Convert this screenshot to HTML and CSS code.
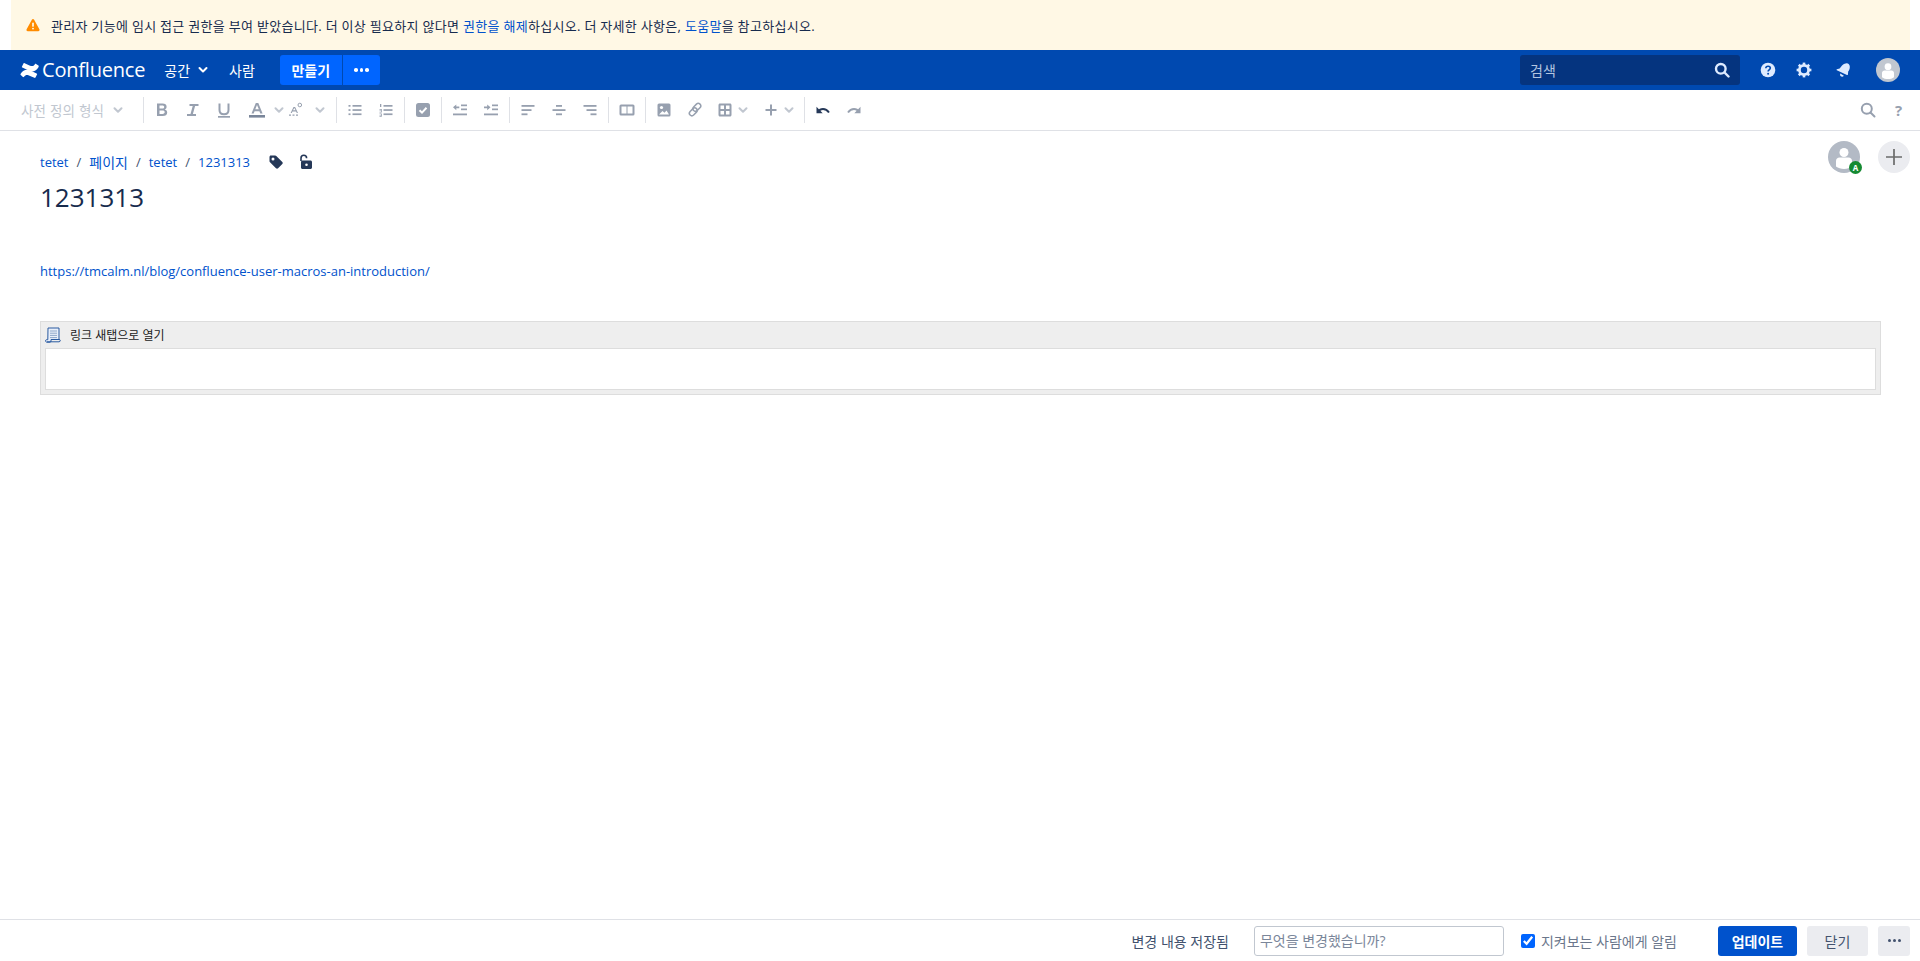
FILE: index.html
```html
<!DOCTYPE html>
<html lang="ko">
<head>
<meta charset="utf-8">
<title>1231313</title>
<link rel="stylesheet" href="styles.css">
</head>
<body>
<div class="page">
  <div class="banner">
    <svg class="banner-icon" viewBox="0 0 16 16"><path fill="#ff8b00" d="M6.7 1.9c.6-1.1 2-1.1 2.6 0l6 11c.6 1.1-.1 2.3-1.3 2.3H2c-1.2 0-1.9-1.2-1.3-2.3z"/><rect x="7" y="5" width="2" height="5" rx="1" fill="#fff8e5"/><circle cx="8" cy="12.1" r="1.1" fill="#fff8e5"/></svg>
    <span>관리자 기능에 임시 접근 권한을 부여 받았습니다. 더 이상 필요하지 않다면 <a href="#">권한을 해제</a>하십시오. 더 자세한 사항은, <a href="#">도움말</a>을 참고하십시오.</span>
  </div>

  <nav class="nav">
    <a class="brand" href="#">
      <svg class="brand-logo" viewBox="0 0 20 16"><path fill="#fff" d="M.4 11.6C3.6 6.8 7 6.2 11 8l6.6 3.1c.5.2.7.7.4 1.2l-1.6 3.1c-.2.4-.7.6-1.2.4l-5.8-2.6c-2.2-1-3.8-.6-5.2 1.5-.3.4-.8.5-1.200.2L.7 12.800c-.4-.3-.5-.8-.3-1.200z"/><path fill="#fff" d="M19.600 4.400C16.400 9.200 13 9.800 9 8L2.400 4.900c-.5-.2-.7-.7-.4-1.200L3.600.6c.2-.4.7-.6 1.200-.4l5.800 2.600c2.200 1 3.800.6 5.200-1.500.3-.4.8-.5 1.200-.2l2.500 1.500c.4.3.5.8.1 1.800z"/></svg>
      <span class="brand-name">Confluence</span>
    </a>
    <a class="nav-link nav-spaces" href="#">공간<svg class="nav-chev" viewBox="0 0 12 12"><path d="M2.500 4l3.500 3.500L9.500 4" fill="none" stroke="#fff" stroke-width="2" stroke-linecap="round" stroke-linejoin="round"/></svg></a>
    <a class="nav-link nav-people" href="#">사람</a>
    <div class="create">
      <button class="create-main">만들기</button>
      <button class="create-more"><span class="dots"><i></i><i></i><i></i></span></button>
    </div>
    <div class="nav-right">
      <div class="search">
        <span class="search-text">검색</span>
        <svg class="ico16" viewBox="0 0 16 16"><circle cx="6.800" cy="6.800" r="4.800" fill="none" stroke="#deebff" stroke-width="2.400"/><path d="M10.500 10.500l4 4" stroke="#deebff" stroke-width="2.400" stroke-linecap="round"/></svg>
      </div>
      <svg class="nav-ico help-ico" viewBox="0 0 16 16"><circle cx="8" cy="8" r="7.300" fill="#deebff"/><path d="M5.800 6.300c0-1.300 1-2.100 2.300-2.100s2.200.8 2.200 1.900c0 1.800-2.200 1.700-2.200 3.300" fill="none" stroke="#0049b0" stroke-width="1.600"/><circle cx="8.100" cy="11.700" r="1" fill="#0049b0"/></svg>
      <svg class="nav-ico gear-ico" viewBox="0 0 16 16"><circle cx="8" cy="8" r="4.600" fill="none" stroke="#deebff" stroke-width="2.800"/><g fill="#deebff"><rect x="6.700" y=".6" width="2.600" height="3"/><rect x="6.700" y="12.400" width="2.600" height="3"/><rect x=".6" y="6.700" width="3" height="2.600"/><rect x="12.400" y="6.700" width="3" height="2.600"/><rect x="6.700" y=".6" width="2.600" height="3" transform="rotate(45 8 8)"/><rect x="6.700" y="12.400" width="2.600" height="3" transform="rotate(45 8 8)"/><rect x=".6" y="6.700" width="3" height="2.600" transform="rotate(45 8 8)"/><rect x="12.400" y="6.700" width="3" height="2.600" transform="rotate(45 8 8)"/></g></svg>
      <svg class="nav-ico bell-ico" viewBox="0 0 16 16"><path fill="#deebff" d="M11.700 1.200c1.800 0 3 1.300 3.100 3.200.1 2-.5 3.600-1.600 5.100l-.3 3c0 .5-.5.7-.9.400L1.800 8.300c-.4-.3-.4-.8.100-1l2.700-.7C6 5 7.500 2.600 9.600 1.800c.7-.4 1.400-.6 2.100-.6zM5.300 11.600l3.600 2.200c-.9 1.200-2.300 1.200-3.100.5-.7-.6-.9-1.700-.5-2.700z"/></svg>
      <span class="avatar avatar-nav"><svg viewBox="0 0 32 32"><circle cx="16" cy="16" r="16" fill="#c1c7d0"/><circle cx="16" cy="11.500" r="4.500" fill="#fff"/><path d="M8 20c0-2 1.500-3.500 3.500-3.500h9c2 0 3.500 1.500 3.500 3.500v5.500c-2 1.600-5 2.500-8 2.500s-6-.9-8-2.500z" fill="#fff"/></svg></span>
    </div>
  </nav>

  <div class="toolbar">
    <div class="tb-format">
      <span class="tb-format-text">사전 정의 형식</span>
      <svg class="chev" viewBox="0 0 12 12"><path d="M2.500 4.300L6 7.800l3.500-3.500"/></svg>
    </div>
    <div class="tb-group">
      <span class="btn"><svg viewBox="0 0 16 16"><path fill="#97a0af" d="M3 1.500h5.600c2.500 0 4 1.200 4 3.200 0 1.300-.7 2.300-1.800 2.700 1.500.4 2.400 1.500 2.400 3 0 2.300-1.700 3.600-4.500 3.600H3zm2.500 5.100h2.700c1.300 0 2-.6 2-1.600s-.7-1.500-2-1.500H5.500zm0 5.300h3c1.500 0 2.200-.6 2.200-1.800s-.8-1.700-2.200-1.700h-3z"/></svg></span>
      <span class="btn"><svg viewBox="0 0 16 16"><path fill="#97a0af" d="M4.500 2h9v2h-3.400l-2.200 8h3.100v2H2v-2h3.500l2.200-8H4.500z"/></svg></span>
      <span class="btn"><svg viewBox="0 0 16 16"><path fill="none" stroke="#97a0af" stroke-width="2" d="M3.500 1.500v6.500c0 2.800 1.700 4.300 4.500 4.300s4.500-1.500 4.500-4.300V1.500"/><rect x="2" y="14" width="12" height="1.700" fill="#97a0af"/></svg></span>
      <span class="drop drop-color">
        <svg class="ico16" viewBox="0 0 16 16"><path fill="#97a0af" d="M6.800 1h2.500l4.300 10.500h-2.300l-.9-2.300H5.600l-.9 2.300H2.500zm-.5 6.200h3.500L8 2.900z"/><rect y="13" width="16" height="2.600" fill="#7a869a"/></svg>
        <svg class="chev" viewBox="0 0 12 12"><path d="M2.500 4.300L6 7.800l3.500-3.500"/></svg>
      </span>
      <span class="drop drop-clear">
        <svg class="ico16" viewBox="0 0 16 16"><path fill="#97a0af" d="M5.500 5h1.600L10 11H8.800l-.7-1.600H4.500L3.800 11H2.600zm-.5 3.300h2.600L6.300 5.900z"/><circle cx="11.800" cy="3" r="1.800" fill="none" stroke="#97a0af"/><path d="M1 13.200h2m1.500 0h2m1.500 0h2" stroke="#97a0af" stroke-width="1.200"/></svg>
        <svg class="chev" viewBox="0 0 12 12"><path d="M2.500 4.300L6 7.800l3.500-3.500"/></svg>
      </span>
    </div>
    <div class="tb-group">
      <span class="btn"><svg viewBox="0 0 16 16" fill="#97a0af"><rect x="1.500" y="3" width="2" height="1.700"/><rect x="5.500" y="3" width="9" height="1.700"/><rect x="1.500" y="7.200" width="2" height="1.700"/><rect x="5.500" y="7.200" width="9" height="1.700"/><rect x="1.500" y="11.400" width="2" height="1.700"/><rect x="5.500" y="11.400" width="9" height="1.700"/></svg></span>
      <span class="btn"><svg viewBox="0 0 16 16" fill="#97a0af"><rect x="2" y="2" width="1.300" height="3"/><path d="M1.500 7h2.300v3.500H1.500v-.8h1.500V9H1.500v-.6h1.500v-.7H1.500zM1.500 11.500h2.300v3.200H1.500V14h1.500v-.5H1.500v-.6h1.500v-.7H1.500z"/><rect x="5.500" y="3" width="9" height="1.700"/><rect x="5.500" y="7.200" width="9" height="1.700"/><rect x="5.500" y="11.400" width="9" height="1.700"/></svg></span>
    </div>
    <div class="tb-group">
      <span class="btn"><svg viewBox="0 0 16 16"><rect x="1" y="1" width="14" height="14" rx="2.500" fill="#97a0af"/><path d="M4.500 8.200l2.500 2.400 4.500-4.800" fill="none" stroke="#fff" stroke-width="2"/></svg></span>
    </div>
    <div class="tb-group">
      <span class="btn"><svg viewBox="0 0 16 16" fill="#97a0af"><path d="M1 5.300L4.300 2.500V4.500h3v1.700h-3v2z"/><rect x="9" y="2.500" width="6" height="1.700"/><rect x="9" y="6.500" width="6" height="1.700"/><rect x="1" y="11.500" width="14" height="1.800"/></svg></span>
      <span class="btn"><svg viewBox="0 0 16 16" fill="#97a0af"><path d="M7.500 5.300L4.200 2.500V4.500H1v1.700h3.200v2z"/><rect x="9" y="2.500" width="6" height="1.700"/><rect x="9" y="6.500" width="6" height="1.700"/><rect x="1" y="11.500" width="14" height="1.800"/></svg></span>
    </div>
    <div class="tb-group">
      <span class="btn"><svg viewBox="0 0 16 16" fill="#97a0af"><rect x="1.500" y="3" width="13" height="1.800"/><rect x="1.500" y="7.200" width="10" height="1.800"/><rect x="1.500" y="11.400" width="6" height="1.800"/></svg></span>
      <span class="btn"><svg viewBox="0 0 16 16" fill="#97a0af"><rect x="5" y="3" width="6" height="1.800"/><rect x="1.500" y="7.200" width="13" height="1.800"/><rect x="5" y="11.400" width="6" height="1.800"/></svg></span>
      <span class="btn"><svg viewBox="0 0 16 16" fill="#97a0af"><rect x="1.500" y="3" width="13" height="1.800"/><rect x="4.500" y="7.200" width="10" height="1.800"/><rect x="8.500" y="11.400" width="6" height="1.800"/></svg></span>
    </div>
    <div class="tb-group">
      <span class="btn"><svg viewBox="0 0 16 16"><rect x=".5" y="2.500" width="15" height="11" rx="1.500" fill="#97a0af"/><rect x="2.500" y="4.500" width="5" height="7" fill="#fff"/><rect x="8.500" y="4.500" width="5" height="7" fill="#fff"/></svg></span>
    </div>
    <div class="tb-group">
      <span class="btn"><svg viewBox="0 0 16 16"><rect x="1.500" y="1.500" width="13" height="13" rx="1.500" fill="#97a0af"/><circle cx="5.500" cy="5.500" r="1.600" fill="#fff"/><path d="M3 12.500l3.500-3.500 2 1.800 2-2.300 2.500 4z" fill="#fff"/></svg></span>
      <span class="btn"><svg viewBox="0 0 16 16" fill="none" stroke="#97a0af" stroke-width="1.500"><rect x="7.300" y="-.6" width="5" height="9" rx="2.500" transform="rotate(45 9.800 3.900) translate(1 1)"/><rect x="3.800" y="7.400" width="5" height="9" rx="2.500" transform="rotate(45 6.300 11.900) translate(-1.500 -1.500)"/></svg></span>
      <span class="drop drop-table">
        <svg class="ico16" viewBox="0 0 16 16"><path fill="#97a0af" fill-rule="evenodd" d="M3 1.500h10c.8 0 1.500.7 1.500 1.500v10c0 .8-.7 1.500-1.500 1.500H3c-.8 0-1.500-.7-1.500-1.500V3c0-.8.7-1.500 1.500-1.500zm.5 2v3.500h3.500V3.500zm5.500 0v3.500h3.500V3.500zm-5.500 5.500v3.500h3.500V9zm5.500 0v3.500h3.500V9z"/></svg>
        <svg class="chev" viewBox="0 0 12 12"><path d="M2.500 4.300L6 7.800l3.500-3.500"/></svg>
      </span>
      <span class="drop drop-plus">
        <svg class="ico16" viewBox="0 0 16 16"><path d="M8 2.500v11M2.500 8h11" stroke="#97a0af" stroke-width="2"/></svg>
        <svg class="chev" viewBox="0 0 12 12"><path d="M2.500 4.300L6 7.800l3.500-3.500"/></svg>
      </span>
    </div>
    <div class="tb-group tb-history">
      <span class="btn"><svg viewBox="0 0 16 16"><path d="M3.500 9.500C5 6.500 10.500 5.500 14 10.500" fill="none" stroke="#253858" stroke-width="2"/><path d="M1.500 4.800v6.400h6.200z" fill="#253858"/></svg></span>
      <span class="btn"><svg viewBox="0 0 16 16"><path d="M12.500 9.500C11 6.500 5.500 5.500 2 10.500" fill="none" stroke="#97a0af" stroke-width="2"/><path d="M14.500 4.800v6.400H8.300z" fill="#97a0af"/></svg></span>
    </div>
    <div class="tb-right">
      <span class="btn"><svg viewBox="0 0 16 16"><circle cx="6.800" cy="6.800" r="5" fill="none" stroke="#97a0af" stroke-width="2"/><path d="M10.500 10.500l4 4" stroke="#97a0af" stroke-width="2" stroke-linecap="round"/></svg></span>
      <span class="btn tb-q">?</span>
    </div>
  </div>

  <main class="main">
    <div class="crumb-row">
      <div class="crumbs">
        <a href="#">tetet</a><span class="sep">/</span><a class="crumb-ko" href="#">페이지</a><span class="sep">/</span><a href="#">tetet</a><span class="sep">/</span><a href="#">1231313</a>
        <svg class="crumb-ico crumb-tag" viewBox="0 0 16 16"><path fill="#253858" fill-rule="evenodd" d="M2.500 1.500h4.700c.4 0 .8.200 1.100.5l6 6c.6.600.6 1.500 0 2.100l-4.200 4.200c-.6.600-1.500.6-2.100 0l-6-6c-.3-.3-.5-.7-.5-1.100V3c0-.8.700-1.500 1-1.500zM5 3.500a1.500 1.500 0 100 3 1.500 1.500 0 000-3z"/></svg>
        <svg class="crumb-ico crumb-lock" viewBox="0 0 16 16"><path d="M3 7V4.200C3 2.500 4.200 1.300 5.800 1.300s2.800 1.200 2.800 2.900" fill="none" stroke="#253858" stroke-width="1.600"/><path fill="#253858" fill-rule="evenodd" d="M4.500 6.500h8c.8 0 1.500.7 1.500 1.500v5.500c0 .8-.7 1.500-1.500 1.500h-8c-.8 0-1.500-.7-1.500-1.500V8c0-.8.700-1.500 1.500-1.500zm4 3a1.300 1.300 0 100 2.600 1.300 1.300 0 000-2.600z"/></svg>
      </div>
      <div class="collab">
        <span class="avatar avatar-user">
          <svg viewBox="0 0 32 32"><circle cx="16" cy="16" r="16" fill="#b3bac5"/><circle cx="16" cy="11.500" r="4.500" fill="#fff"/><path d="M8 20c0-2 1.500-3.500 3.500-3.500h9c2 0 3.500 1.500 3.500 3.500v5.500c-2 1.600-5 2.500-8 2.500s-6-.9-8-2.500z" fill="#fff"/></svg>
          <span class="badge">A</span>
        </span>
        <span class="add-user"><svg viewBox="0 0 16 16"><path d="M8 0v16M0 8h16" stroke="#6b6b6b" stroke-width="1.700"/></svg></span>
      </div>
    </div>
    <h1 class="title">1231313</h1>
    <p class="body-link"><a href="#">https://tmcalm.nl/blog/confluence-user-macros-an-introduction/</a></p>
    <div class="macro">
      <div class="macro-head">
        <svg class="macro-ico" viewBox="0 0 16 16"><path d="M3 1h11v11.500H6v1.700c0 .6-.5 1-1 1H2c-.8 0-1.500-.6-1.500-1.300 0-.6.300-1 1-1.200h1.300z" fill="#e8effa" stroke="#2a5aa0"/><path d="M5 4h7M5 6.200h7M5 8.400h7M5 10.600h7" stroke="#8ea7c9"/><path d="M2 14.800h12c.7 0 1.300-.5 1.300-1.200 0-.6-.4-1.100-1.300-1.100H6" fill="none" stroke="#2a5aa0"/></svg>
        <span>링크 새탭으로 열기</span>
      </div>
      <div class="macro-body"></div>
    </div>
  </main>

  <footer class="footer">
    <span class="saved">변경 내용 저장됨</span>
    <input class="comment" type="text" placeholder="무엇을 변경했습니까?">
    <label class="notify"><input type="checkbox" checked><span>지켜보는 사람에게 알림</span></label>
    <button class="f-btn f-update">업데이트</button>
    <button class="f-btn f-close">닫기</button>
    <button class="f-btn f-more"><span class="dots dots-dark"><i></i><i></i><i></i></span></button>
  </footer>
</div>
</body>
</html>
```

FILE: styles.css
```css
* { box-sizing: border-box; }
html, body { margin: 0; height: 100%; }
body {
  font-family: "Open Sans", "Noto Sans CJK KR", sans-serif;
  color: #172b4d;
  background: #fff;
  overflow: hidden;
}
a { color: #0052cc; text-decoration: none; }
svg { display: block; flex: none; }
.page { display: flex; flex-direction: column; height: 100vh; }

.banner {
  height: 50px;
  margin: 0 10px 0 11px;
  padding: 0 15px;
  background: #fff8e5;
  display: flex;
  align-items: center;
  gap: 11px;
  font-size: 13px;
  letter-spacing: .3px;
  flex: none;
}
.banner-icon { width: 14px; height: 14px; }

.nav {
  height: 40px;
  background: #0049b0;
  display: flex;
  align-items: center;
  color: #fff;
  flex: none;
}
.brand { display: flex; align-items: center; color: #fff; margin-left: 20px; gap: 3px; }
.brand-logo { width: 19px; height: 15px; }
.brand-name { font-size: 20px; line-height: 40px; letter-spacing: -.2px; }
.nav-link { color: #fff; font-size: 14px; display: flex; align-items: center; }
.nav-spaces { margin-left: 19px; gap: 7px; }
.nav-chev { width: 12px; height: 12px; }
.nav-people { margin-left: 20px; }
.create { display: flex; margin-left: 25px; height: 30px; }
.create button { border: 0; background: #0065ff; color: #fff; padding: 0; height: 30px; font-family: inherit; }
.create-main { width: 62px; border-radius: 3px 0 0 3px; font-size: 14px; font-weight: 700; }
.create-more { width: 37px; margin-left: 1px; border-radius: 0 3px 3px 0; display: flex; align-items: center; justify-content: center; }
.dots { display: flex; gap: 2px; }
.dots i { width: 3.500px; height: 3.500px; border-radius: 50%; background: #fff; display: block; }
.dots-dark i { background: #42526e; width: 3px; height: 3px; }
.nav-right { margin-left: auto; display: flex; align-items: center; margin-right: 20px; }
.search {
  width: 220px; height: 30px; background: #05347f; border-radius: 3px;
  display: flex; align-items: center; justify-content: space-between; padding: 0 10px;
}
.search-text { color: #b3c5e0; font-size: 14px; }
.ico16 { width: 16px; height: 16px; }
.nav-ico { width: 16px; height: 16px; }
.help-ico { margin-left: 20px; }
.gear-ico { margin-left: 20px; }
.bell-ico { margin-left: 23px; }
.avatar-nav { width: 24px; height: 24px; margin-left: 25px; display: block; }

.toolbar {
  height: 41px;
  border-bottom: 1px solid #dfe1e6;
  display: flex;
  align-items: center;
  padding: 0 6px 0 13px;
  flex: none;
}
.tb-format { width: 130px; display: flex; align-items: center; padding-left: 8px; gap: 8px; }
.tb-format-text { color: #c1c7d0; font-size: 13.500px; letter-spacing: .2px; white-space: nowrap; }
.tb-group {
  height: 26px;
  border-left: 1px solid #dfe1e6;
  display: flex;
  align-items: center;
  padding: 0 3px 0 2px;
}
.btn { width: 31px; height: 26px; display: flex; align-items: center; justify-content: center; }
.btn svg { width: 16px; height: 16px; }
.drop { display: flex; align-items: center; }
.chev { width: 12px; height: 12px; fill: none; stroke: #c1c7d0; stroke-width: 2; stroke-linecap: round; stroke-linejoin: round; }
.drop-color { margin-left: 10px; gap: 8px; }
.drop-clear { margin-left: 3px; gap: 10px; margin-right: 7px; }
.drop-table { margin-left: 7px; gap: 4px; }
.drop-plus { margin-left: 14px; gap: 4px; margin-right: 6px; }
.tb-right { margin-left: auto; display: flex; }
.tb-q { color: #97a0af; font-size: 15px; font-weight: 700; }

.main { flex: 1; padding: 0 39px 0 40px; min-height: 0; }
.crumb-row { display: flex; justify-content: space-between; align-items: flex-start; padding-top: 10px; height: 42px; margin-right: -29px; }
.crumbs { display: flex; align-items: center; font-size: 13px; height: 42px; margin-top: 0; }
.sep { color: #42526e; margin: 0 8px; }
.crumb-ko { font-size: 14px; }
.crumb-ico { width: 16px; height: 16px; }
.crumb-tag { margin-left: 18px; }
.crumb-lock { margin-left: 14px; }
.collab { display: flex; gap: 18px; align-items: center; height: 32px; margin-top: 0; }
.avatar { position: relative; }
.avatar-user { width: 32px; height: 32px; display: block; }
.avatar svg { width: 100%; height: 100%; }
.badge {
  position: absolute; left: 21px; top: 20px; width: 13px; height: 13px; border-radius: 50%;
  background: #158a32; color: #fff; font-size: 8px; font-weight: 700; line-height: 13px; text-align: center;
}
.add-user { width: 32px; height: 32px; border-radius: 50%; background: #ebecf0; display: flex; align-items: center; justify-content: center; }
.add-user svg { width: 16px; height: 16px; }
.title { font-size: 26px; font-weight: 400; line-height: 36px; margin: 6px 0 0; color: #172b4d; }
.body-link { font-size: 13px; line-height: 20px; margin: 46px 0 0; }
.macro {
  margin-top: 40px;
  height: 74px;
  background: #eee;
  border: 1px solid #ddd;
  padding: 0 4px;
}
.macro-head { height: 26px; display: flex; align-items: center; gap: 9px; font-size: 12px; color: #222; }
.macro-ico { width: 16px; height: 16px; }
.macro-body { height: 42px; background: #fff; border: 1px solid #ddd; }

.footer {
  height: 42px;
  border-top: 1px solid #dfe1e6;
  display: flex;
  align-items: center;
  justify-content: flex-end;
  padding: 0 10px 0 0;
  flex: none;
  font-size: 14px;
}
.saved { color: #42526e; margin-right: 25px; }
.comment {
  width: 250px; height: 30px; border: 1px solid #c1c7d0; border-radius: 3px;
  padding: 0 5px; font-family: inherit; font-size: 14px; color: #172b4d; background: #fff;
}
.comment::placeholder { color: #7a869a; }
.notify { display: flex; align-items: center; gap: 6px; margin-left: 17px; color: #6b778c; }
.notify input { margin: 0; width: 14px; height: 14px; accent-color: #0065ff; }
.f-btn { height: 30px; border: 0; border-radius: 3px; font-family: inherit; font-size: 14px; padding: 0; }
.f-update { width: 79px; margin-left: 41px; background: #0052cc; color: #fff; font-weight: 700; }
.f-close { width: 61px; margin-left: 10px; background: #ebecf0; color: #42526e; }
.f-more { width: 32px; margin-left: 10px; background: #ebecf0; display: flex; align-items: center; justify-content: center; }
```
